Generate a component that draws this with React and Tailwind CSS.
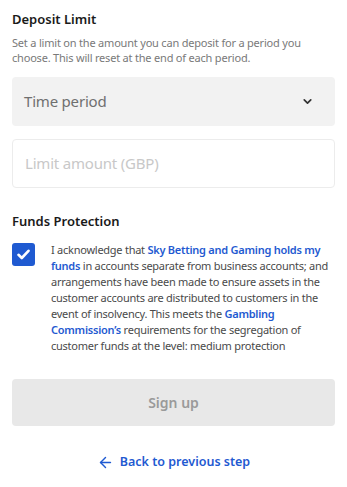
import { ChevronDown, ArrowLeft } from 'lucide-react'

const font = { fontFamily: '"Noto Sans", "Open Sans", sans-serif' }

export default function App() {
  return (
    <div className="w-[347px] min-h-[487px] bg-white px-3 text-[#1a1a1a]" style={font}>
      <h2 className="pt-[10px] text-[13px] font-semibold leading-[18px]">Deposit Limit</h2>
      <p className="mt-[7px] text-[11px] leading-[15px] tracking-[-0.2px] text-[#797979]">
        Set a limit on the amount you can deposit for a period you choose. This will reset at the end of each period.
      </p>

      <div className="mt-[12px] flex h-[49px] items-center justify-between rounded-[4px] bg-[#f2f2f2] pl-3 pr-[21px]">
        <span className="text-[15px] tracking-[-0.2px] text-[#6f6f6f]">Time period</span>
        <ChevronDown size={13} strokeWidth={3.2} className="text-[#333]" />
      </div>

      <div className="mt-[13px] flex h-[49px] items-center rounded-[4px] border border-[#ececec] pl-3">
        <span className="text-[15px] tracking-[-0.2px] text-[#c8c8c8]">Limit amount (GBP)</span>
      </div>

      <h2 className="mt-[24px] text-[13px] font-semibold leading-[18px]">Funds Protection</h2>

      <div className="mt-[13px] flex gap-[16px]">
        <div className="flex h-[23px] w-[23px] shrink-0 items-center justify-center rounded-[3px] bg-[#1f5ad1]">
          <svg width="13" height="11" viewBox="0 0 13 11" fill="none">
            <path d="M1.5 5.8 L4.8 9 L11.5 1.8" stroke="white" strokeWidth="2.6" strokeLinecap="round" strokeLinejoin="round" />
          </svg>
        </div>
        <p className="-mt-[1px] text-[11px] leading-[16px] tracking-[-0.25px] text-[#4a4a4a]">
          I acknowledge that <span className="font-semibold text-[#1f5ad1]">Sky Betting and Gaming holds my funds</span> in accounts separate from business accounts; and arrangements have been made to ensure assets in the customer accounts are distributed to customers in the event of insolvency. This meets the <span className="font-semibold text-[#1f5ad1]">Gambling Commission&rsquo;s</span> requirements for the segregation of customer funds at the level: medium protection
        </p>
      </div>

      <button className="mt-[25px] flex h-[47px] w-full items-center justify-center rounded-[4px] bg-[#e8e8e8] text-[14px] font-semibold text-[#9a9a9a]">
        Sign up
      </button>

      <div className="mt-[27px] flex items-center justify-center gap-[6px] text-[#1f5ad1]">
        <ArrowLeft size={17} strokeWidth={2} />
        <span className="text-[12.5px] font-semibold">Back to previous step</span>
      </div>
    </div>
  )
}
